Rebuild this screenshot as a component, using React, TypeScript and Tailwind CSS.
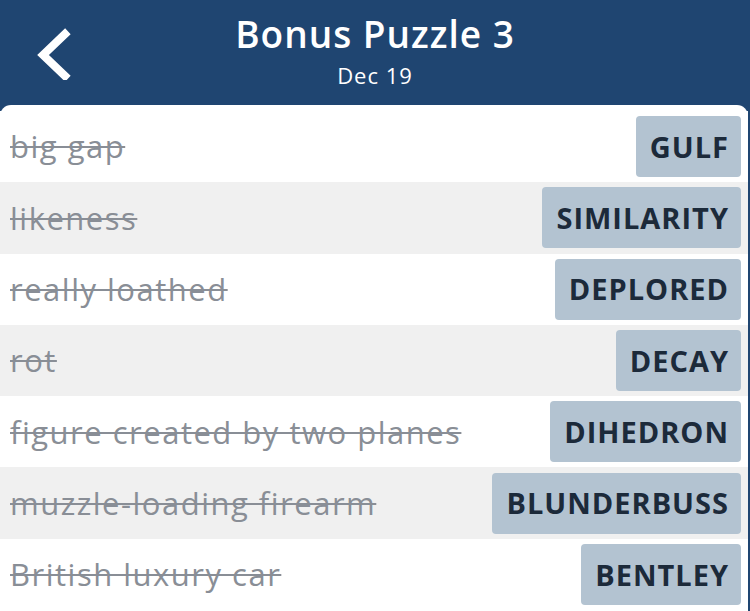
const clues = [
  { clue: "big gap", answer: "GULF" },
  { clue: "likeness", answer: "SIMILARITY" },
  { clue: "really loathed", answer: "DEPLORED" },
  { clue: "rot", answer: "DECAY" },
  { clue: "figure created by two planes", answer: "DIHEDRON" },
  { clue: "muzzle-loading firearm", answer: "BLUNDERBUSS" },
  { clue: "British luxury car", answer: "BENTLEY" },
];

const App = () => {
  return (
    <div className="w-[750px] h-[611px] overflow-hidden bg-[#1f4571] font-['Open_Sans','Noto_Sans',sans-serif]">
      <header className="relative h-[105px] flex flex-col items-center text-white">
        <button className="absolute left-[34px] top-[28px] w-[40px] h-[52px]">
          <svg viewBox="0 0 40 52" className="w-[40px] h-[52px]">
            <path d="M31 6 L9 27 L31 48" fill="none" stroke="white" strokeWidth="8" strokeLinecap="square" strokeLinejoin="miter" />
          </svg>
        </button>
        <h1 className="mt-[9px] text-[37px] leading-[50px] font-semibold tracking-[1px]">Bonus Puzzle 3</h1>
        <p className="mt-[3px] text-[22px] leading-[26px] tracking-[1px]">Dec 19</p>
      </header>
      <div className="mr-[2px] h-[506px] bg-white rounded-t-[11px] pt-[6px]">
        {clues.map((c, i) => (
          <div
            key={c.answer}
            className={`flex items-center justify-between h-[71.3px] pl-[10px] pr-[7px] ${i % 2 === 1 ? "bg-[#f0f0f0]" : "bg-white"}`}
          >
            <span className="text-[31px] text-[#898e96] line-through decoration-[2px] tracking-[1.5px]">{c.clue}</span>
            <span className="h-[61px] flex items-center pl-[14px] pr-[12px] rounded-[4px] bg-[#b3c3d1] text-[#1c2a3a] text-[29px] font-bold tracking-[1px]">
              {c.answer}
            </span>
          </div>
        ))}
      </div>
    </div>
  );
};

export default App;
